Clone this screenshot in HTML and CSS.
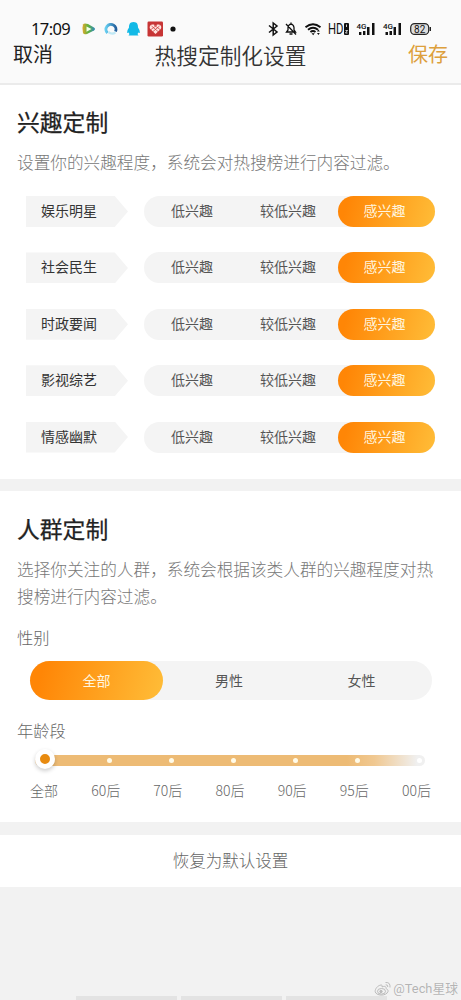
FILE: index.html
```html
<!DOCTYPE html>
<html lang="zh-CN">
<head>
<meta charset="utf-8">
<title>热搜定制化设置</title>
<link rel="stylesheet" href="styles.css">
</head>
<body>
<header class="header">
  <div class="status">
    <span class="clock">17:09</span>
    <svg class="apps" width="100" height="18" viewBox="0 0 100 18">
      <defs>
        <linearGradient id="play" x1="0" x2="1"><stop offset="0" stop-color="#e3a82c"/><stop offset=".45" stop-color="#62b43c"/><stop offset="1" stop-color="#3189bd"/></linearGradient>
        <linearGradient id="ring" x1="0" x2="1"><stop offset="0" stop-color="#65cdf0"/><stop offset="1" stop-color="#245f9c"/></linearGradient>
      </defs>
      <path d="M3 4.500Q4 2.700 8 4L14 7.500Q16 9 14 10.500L7 14Q4 15 3 13Q1.800 8 3 4.500Z" fill="url(#play)"/>
      <path d="M6.500 6.500L11.500 9L6.500 11.700Z" fill="#f4ffe8"/>
      <path d="M27.500 13A5 5 0 1 1 35.500 11.500" fill="none" stroke="url(#ring)" stroke-width="2.900"/>
      <path d="M28 13.200Q32 16 36 13.500L35 11.500Q31 13.500 29 11Z" fill="#bfe8f5"/>
      <path d="M53.500 2C49.500 2 49 5 49 7.500Q47 10 47 13L48.500 12.500L49.500 14L48.500 15.500H58.500L57.500 14L58.500 12.500L60 13Q60 10 58 7.500C58 5 57.500 2 53.500 2Z" fill="#12b9e6"/>
      <rect x="67.500" y="1.500" width="15.500" height="15" rx="1.200" fill="#c73535"/>
      <path d="M75.500 14L70.300 9C68 5.500 73 2.700 75.500 5.700C78 2.700 83 5.500 80.700 9Z" fill="#ffe4df"/>
      <path d="M71.500 6L78 11.500M74 5L80 9.500M79.500 6L73 11.500M77 5L71 9.500" stroke="#c73535" stroke-width=".7"/>
      <circle cx="93" cy="9" r="2.600" fill="#111"/>
    </svg>
    <svg class="signals" width="168" height="18" viewBox="0 0 168 18">
      <g fill="none" stroke="#111" stroke-width="1.500">
        <path d="M1 5.500L9 12L5.200 15V3L9 6L1 12.500"/>
        <path d="M18.500 12H27.500L26 10V7.500Q25.500 4.500 23 4.200Q20.500 4.500 20 7.500V10ZM21.500 14H24.500M18 4L28 14.500M23 2.500V4" stroke-width="1.300"/>
        <path d="M37.500 7.200Q45 1.300 52.500 7.200M40 9.700Q45 5.600 50 9.700M42.400 12Q45 10 47.500 12" stroke-width="1.900"/>
      </g>
      <path d="M43.500 13.300H46.700L45.200 15.200ZM49 11.500L50.400 9.500L51.800 11.500ZM49 13L50.400 15L51.800 13Z" fill="#111"/>
      <text x="60" y="14" class="hd" textLength="15.500" lengthAdjust="spacingAndGlyphs">HD</text>
      <rect x="76" y="3" width="5" height="12" rx="1" fill="#111"/>
      <path d="M78.500 4.500V7M77.500 10.500H79.500L77.500 13H79.500" fill="none" stroke="#fff" stroke-width=".8"/>
      <text x="88.500" y="8.500" class="net">4G</text>
      <path d="M91 12H93.400V15H91ZM95 11H97.400V15H95ZM99 7H101.500V15H99ZM104 3H106.500V15H104Z" fill="#111"/>
      <text x="115" y="8.500" class="net">4G</text>
      <path d="M117.500 12H120V15H117.500ZM121.500 11H124V15H121.500ZM125.500 7H128V15H125.500ZM130.500 3H133V15H130.500Z" fill="#111"/>
      <rect x="142.700" y="3.600" width="18" height="10.800" rx="4" fill="#dedede" stroke="#222" stroke-width="1.200"/>
      <path d="M162.300 7V11" stroke="#222" stroke-width="1.400"/>
      <text x="151.700" y="12.500" text-anchor="middle" class="charge">82</text>
    </svg>
  </div>
  <nav class="nav">
    <span class="cancel">取消</span>
    <h1 class="title">热搜定制化设置</h1>
    <span class="save">保存</span>
  </nav>
</header>

<section class="panel interests">
  <h2 class="heading">兴趣定制</h2>
  <p class="desc">设置你的兴趣程度，系统会对热搜榜进行内容过滤。</p>
  <div class="rows">
    <div class="row"><span class="tag">娱乐明星</span><div class="levels"><span>低兴趣</span><span>较低兴趣</span><span class="active">感兴趣</span></div></div>
    <div class="row"><span class="tag">社会民生</span><div class="levels"><span>低兴趣</span><span>较低兴趣</span><span class="active">感兴趣</span></div></div>
    <div class="row"><span class="tag">时政要闻</span><div class="levels"><span>低兴趣</span><span>较低兴趣</span><span class="active">感兴趣</span></div></div>
    <div class="row"><span class="tag">影视综艺</span><div class="levels"><span>低兴趣</span><span>较低兴趣</span><span class="active">感兴趣</span></div></div>
    <div class="row"><span class="tag">情感幽默</span><div class="levels"><span>低兴趣</span><span>较低兴趣</span><span class="active">感兴趣</span></div></div>
  </div>
</section>

<section class="panel crowd">
  <h2 class="heading">人群定制</h2>
  <p class="desc">选择你关注的人群，系统会根据该类人群的兴趣程度对热搜榜进行内容过滤。</p>
  <h3 class="label">性别</h3>
  <div class="gender"><span class="active">全部</span><span>男性</span><span>女性</span></div>
  <h3 class="label age">年龄段</h3>
  <div class="slider"><i class="knob"></i><i class="dot"></i><i class="dot"></i><i class="dot"></i><i class="dot"></i><i class="dot"></i><i class="dot"></i></div>
  <div class="ages"><span>全部</span><span>60后</span><span>70后</span><span>80后</span><span>90后</span><span>95后</span><span>00后</span></div>
</section>

<div class="reset">恢复为默认设置</div>

<footer class="footer">
  <div class="bars"><i></i><i></i><i></i></div>
  <div class="watermark">
    <svg width="18" height="16" viewBox="0 0 18 16" fill="none" stroke="#bbb">
      <path d="M7 4C3.500 4.500 1 8 1.200 10.500C1.500 15 12.500 15.500 14 10.500C14.500 8.500 12.500 8 12 7.500C12.500 5 10 5 8 6C8.500 4.500 8 4 7 4Z"/>
      <ellipse cx="7.500" cy="10.300" rx="4" ry="2.800"/>
      <circle cx="7" cy="10.500" r="1.200" fill="#bbb"/>
      <path d="M11.500 1.500Q16.500 1 16 6.500M11.700 3.800Q14 3.500 13.800 6"/>
    </svg>
    <span>@Tech星球</span>
  </div>
</footer>
</body>
</html>
```
FILE: styles.css
```css
* { box-sizing: border-box; }
body {
  margin: 0;
  width: 461px;
  height: 1000px;
  overflow: hidden;
  display: flex;
  flex-direction: column;
  background: #f2f2f2;
  font-family: "Noto Sans CJK SC", sans-serif;
  color: #333;
}
h1, h2, h3, p { margin: 0; font-weight: 400; }

.header { height: 85px; background: #fafafa; border-bottom: 2px solid #ebebeb; }
.status { display: flex; align-items: center; height: 38px; padding: 19px 0 0 31px; }
.clock { width: 49px; font: 16.500px/19px "Noto Sans", sans-serif; letter-spacing: -.6px; color: #111; }
.apps { flex: none; }
.signals { flex: none; margin-left: 88px; }
.hd { font: 14px Roboto, sans-serif; fill: #111; }
.net { font: 500 8px Roboto, sans-serif; fill: #111; }
.charge { font: 10px Roboto, sans-serif; fill: #111; }
.nav { display: flex; justify-content: space-between; align-items: center; height: 32px; padding: 0 13px; line-height: 32px; }
.cancel, .save { font-size: 20px; color: #222; }
.save { color: #dda03c; }
.title { font-size: 21.700px; font-weight: 350; padding-top: 2px; }

.panel { background: #fff; padding: 0 17px; }
.interests { height: 394px; padding-top: 20px; }
.heading { font-size: 22.800px; line-height: 34px; font-weight: 400; color: #222; -webkit-text-stroke: .25px #222; }
.desc { width: 424px; margin-top: 10px; font-size: 16.650px; line-height: 27px; font-weight: 300; color: #777; }
.rows { display: flex; flex-direction: column; gap: 25.400px; margin-top: 20px; padding-left: 9px; }
.row { display: flex; gap: 16px; height: 31px; font-size: 14px; line-height: 28.500px; }
.tag { width: 102px; padding-left: 15px; background: #f4f4f4; clip-path: polygon(0 0, 87% 0, 100% 50%, 87% 100%, 0 100%); }
.levels { display: grid; grid-template-columns: 96px 98px 97px; border-radius: 16px; background: #f4f4f4; text-align: center; color: #555; }
.levels span:nth-child(2) { padding-right: 2px; }
.levels .active { padding-right: 4px; }
.active { border-radius: 20px; background: linear-gradient(105deg, #ff8606 10%, #ffbd38); color: #fff5df; }

.crowd { height: 331px; margin-top: 12px; padding-top: 21px; }
.crowd .desc { line-height: 26.500px; margin-top: 10px; }
.label { margin-top: 16px; font-size: 16.300px; line-height: 24px; font-weight: 300; color: #666; }
.gender { display: grid; grid-template-columns: 133px 132px 137px; width: 402px; height: 39px; margin: 12px 0 0 13px; border-radius: 20px; background: #f4f4f4; font-size: 14px; line-height: 38px; text-align: center; color: #555; }
.gender span:last-child { padding-right: 4px; }
.age { margin-top: 18px; }
.slider { display: flex; align-items: center; justify-content: space-between; width: 390px; height: 11px; margin: 13px 0 0 18px; padding-right: 3px; border-radius: 6px; background: linear-gradient(90deg, #edbb75 80%, #f0c891 87%, #f0f0f0 98%); }
.knob { flex: none; width: 20px; height: 20px; margin: -3px -5.500px 0 0; border: 5px solid #fff; border-radius: 50%; background: #e88b10; box-shadow: 0 2px 4px #0003; }
.dot { width: 5px; height: 5px; border-radius: 50%; background: #fffbe9; }
.dot:last-child { background: #fff; }
.ages { display: flex; justify-content: space-between; width: 401px; margin: 12px 0 0 13px; font-size: 14px; line-height: 24px; font-weight: 300; color: #666; }

.reset { height: 52px; margin-top: 13px; background: #fff; text-align: center; font-size: 16.500px; line-height: 50px; font-weight: 300; color: #666; }
.footer { position: relative; flex: 1; display: flex; align-items: flex-end; }
.bars { display: flex; gap: 4px; margin-left: 76px; }
.bars i { width: 101px; height: 4px; background: #e3e3e3; }
.watermark { position: absolute; right: 3px; bottom: 2px; display: flex; align-items: center; gap: 1px; font: 12.800px/18px Roboto, "Noto Sans CJK SC", sans-serif; color: #b4b4b4; text-shadow: 0 0 1px #fff; }
```
